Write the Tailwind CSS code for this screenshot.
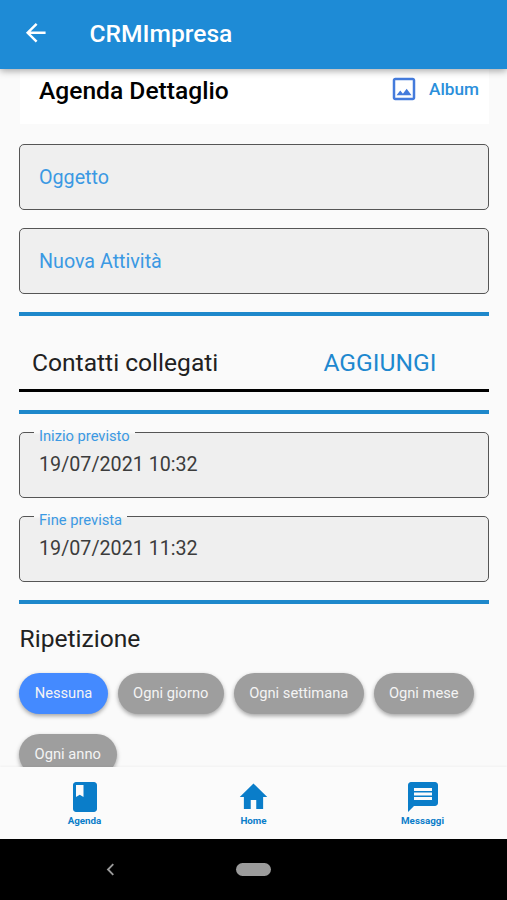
<!DOCTYPE html>
<html lang="it">
<head>
<meta charset="utf-8">
<title>CRMImpresa</title>
<script src="https://cdn.jsdelivr.net/npm/@tailwindcss/browser@4"></script>
</head>
<body class="w-[507px] h-[900px] overflow-hidden flex flex-col bg-[#fafafa] font-[Roboto,sans-serif] text-[#212121]">
<header class="relative z-10 h-[69px] shrink-0 bg-[#1e8bd6] flex items-center pl-[20.5px] pb-[3px] shadow-[0_2px_7px_rgba(0,0,0,0.34)]">
  <svg class="size-[29.5px]" viewBox="0 0 24 24" fill="#fff"><path d="M20 11H7.830l5.590-5.590L12 4l-8 8 8 8 1.410-1.410L7.830 13H20v-2z"/></svg>
  <h1 class="ml-[39.5px] pt-px text-[24.6px] leading-[30px] font-medium text-white whitespace-nowrap">CRMImpresa</h1>
</header>
<main class="h-[698px] shrink-0 overflow-hidden pl-[19px] pr-[18px] flex flex-col">
  <div class="h-[55px] ml-px shrink-0 bg-white pl-[19px] pr-[10px] pb-[12px] flex items-center justify-between">
    <h2 class="text-[24.6px] leading-[30px] font-medium text-black whitespace-nowrap">Agenda Dettaglio</h2>
    <div class="flex items-center pb-[3px]">
      <svg class="size-[30px]" viewBox="0 0 24 24" fill="#447bdc"><path d="M19 5v14H5V5h14m0-2H5c-1.100 0-2 .9-2 2v14c0 1.100.9 2 2 2h14c1.100 0 2-.9 2-2V5c0-1.100-.9-2-2-2zm-4.860 8.860l-3 3.870L9 13.140 6 17h12l-3.860-5.140z"/></svg>
      <span class="ml-[10px] text-[17.2px] leading-[22px] font-medium text-[#2a8fdb]">Album</span>
    </div>
  </div>
  <div class="mt-[20px] h-[66px] shrink-0 rounded-[5px] border-[1.5px] border-[#555] bg-[#efefef] flex items-center pl-[19px] pt-[2px] text-[19.7px] text-[#3b99e3]">Oggetto</div>
  <div class="mt-[18px] h-[66px] shrink-0 rounded-[5px] border-[1.5px] border-[#555] bg-[#efefef] flex items-center pl-[19px] pt-[2px] text-[19.7px] text-[#3b99e3]">Nuova Attività</div>
  <div class="mt-[18px] h-[4px] shrink-0 bg-[#1e88cb]"></div>
  <div class="mt-[13px] h-[63px] shrink-0 border-b-[3px] border-black flex items-center pl-[13px] pr-[52.5px] pt-[8px] justify-between text-[24.600px] leading-[30px]">
    <span>Contatti collegati</span>
    <span class="text-[#1e88cf]">AGGIUNGI</span>
  </div>
  <div class="mt-[18px] h-[4px] shrink-0 bg-[#1e88cb]"></div>
  <div class="relative mt-[18px] h-[66px] shrink-0 rounded-[5px] border-[1.5px] border-[#555] bg-[#efefef] flex items-center pl-[19px] pb-[1px] text-[19.7px] text-[#3c3c3c]">19/07/2021 10:32
    <span class="absolute left-[14px] -top-[6px] px-[5px] text-[14.7px] leading-[18px] text-[#3b99e3] bg-linear-to-b from-[#fafafa] from-[5px] to-[#efefef] to-[8px]">Inizio previsto</span>
  </div>
  <div class="relative mt-[18px] h-[66px] shrink-0 rounded-[5px] border-[1.5px] border-[#555] bg-[#efefef] flex items-center pl-[19px] pb-[1px] text-[19.7px] text-[#3c3c3c]">19/07/2021 11:32
    <span class="absolute left-[14px] -top-[6px] px-[5px] text-[14.7px] leading-[18px] text-[#3b99e3] bg-linear-to-b from-[#fafafa] from-[5px] to-[#efefef] to-[8px]">Fine prevista</span>
  </div>
  <div class="mt-[18px] h-[4px] shrink-0 bg-[#1e88cb]"></div>
  <h3 class="mt-[20px] ml-[0.5px] text-[24.6px] leading-[30px]">Ripetizione</h3>
  <div class="mt-[19px] flex flex-wrap gap-x-[10px] gap-y-[20px] text-[14.7px] text-[#f4f4f4] whitespace-nowrap">
    <span class="w-[89px] h-[41px] rounded-full bg-[#448aff] flex items-center justify-center shadow-[0_2px_4px_rgba(0,0,0,0.35)]">Nessuna</span>
    <span class="w-[105.5px] h-[41px] rounded-full bg-[#9e9e9e] flex items-center justify-center shadow-[0_2px_4px_rgba(0,0,0,0.35)]">Ogni giorno</span>
    <span class="w-[130.5px] h-[41px] rounded-full bg-[#9e9e9e] flex items-center justify-center shadow-[0_2px_4px_rgba(0,0,0,0.35)]">Ogni settimana</span>
    <span class="w-[99.5px] h-[41px] rounded-full bg-[#9e9e9e] flex items-center justify-center shadow-[0_2px_4px_rgba(0,0,0,0.35)]">Ogni mese</span>
    <span class="w-[97.5px] h-[41px] rounded-full bg-[#9e9e9e] flex items-center justify-center shadow-[0_2px_4px_rgba(0,0,0,0.35)]">Ogni anno</span>
  </div>
</main>
<nav class="relative h-[72px] shrink-0 bg-[#fbfbfb] grid grid-cols-3 pt-[12px] text-[#0a7dc9] text-[9.8px] leading-[12px] font-bold shadow-[0_-1px_2px_rgba(0,0,0,0.04)]">
  <div class="flex flex-col items-center">
    <svg class="size-[36px]" viewBox="0 0 24 24" fill="currentColor"><path d="M18 2H6c-1.100 0-2 .9-2 2v16c0 1.100.9 2 2 2h12c1.100 0 2-.9 2-2V4c0-1.100-.9-2-2-2zM6 4h5v8l-2.500-1.500L6 12V4z"/></svg>
    <span>Agenda</span>
  </div>
  <div class="flex flex-col items-center">
    <svg class="w-[33px] h-[36px]" viewBox="0 0 24 24" preserveAspectRatio="none" fill="currentColor"><path d="M10 20v-6h4v6h5v-8h3L12 3 2 12h3v8z"/></svg>
    <span>Home</span>
  </div>
  <div class="flex flex-col items-center">
    <svg class="size-[36px]" viewBox="0 0 24 24" fill="currentColor"><path d="M20 2H4c-1.100 0-1.990.9-1.990 2L2 22l4-4h14c1.100 0 2-.9 2-2V4c0-1.100-.9-2-2-2zm-2 12H6v-2h12v2zm0-3H6V9h12v2zm0-3H6V6h12v2z"/></svg>
    <span>Messaggi</span>
  </div>
</nav>
<footer class="h-[61px] shrink-0 bg-black flex items-center">
  <svg class="ml-[106px] w-[9px] h-[13px]" viewBox="0 0 9 14" fill="none" stroke="#9a9a9a" stroke-width="2"><path d="M7.500 1.200L1.800 7l5.700 5.800"/></svg>
  <span class="ml-[121px] w-[35px] h-[13px] rounded-full bg-[#9b9b9b]"></span>
</footer>
</body>
</html>
